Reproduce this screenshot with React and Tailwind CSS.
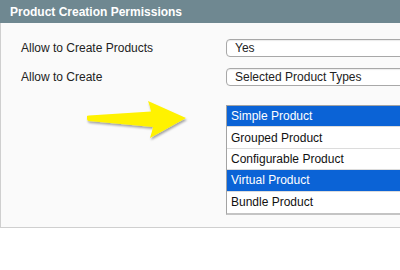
import React from 'react';

const types = [
  { name: 'Simple Product', selected: true },
  { name: 'Grouped Product', selected: false },
  { name: 'Configurable Product', selected: false },
  { name: 'Virtual Product', selected: true },
  { name: 'Bundle Product', selected: false },
];

function Arrow() {
  return (
    <svg className="absolute left-[84px] top-[98px]" width="108" height="46" viewBox="0 0 108 46">
      <defs>
        <filter id="sh" x="-10%" y="-20%" width="130%" height="150%">
          <feDropShadow dx="1" dy="2" stdDeviation="1.2" floodColor="#000" floodOpacity="0.35" />
        </filter>
      </defs>
      <path
        d="M3 18 Q3 17.5 5 17.5 L67 13.5 Q66 8 64 3 L102 20 L66 40 Q68 34 69 29 L5 23 Q3 23 3 21 Z"
        fill="#fff200"
        filter="url(#sh)"
      />
    </svg>
  );
}

export default function App() {
  return (
    <div className="relative w-[400px] h-[270px] overflow-hidden bg-white font-['Liberation_Sans',Arial,sans-serif] text-[12px] text-[#222]">
      <div className="h-[23px] bg-[#6f8891] pl-[10px] flex items-center text-white font-bold text-[12px]">
        Product Creation Permissions
      </div>
      <div className="h-[205px] bg-[#fafafa] border-l border-b border-[#cfcfcf] pt-[16px]">
        <div className="flex items-center h-[18px]">
          <div className="w-[225px] shrink-0 pl-[20px]">Allow to Create Products</div>
          <div className="w-[220px] shrink-0 h-[18px] rounded-[4px] border border-[#a8a8a8] bg-white pl-[8px] flex items-center shadow-[inset_0_1px_1px_rgba(0,0,0,0.08)]">
            Yes
          </div>
        </div>
        <div className="flex items-center h-[18px] mt-[11px]">
          <div className="w-[225px] shrink-0 pl-[20px]">Allow to Create</div>
          <div className="w-[220px] shrink-0 h-[18px] rounded-[4px] border border-[#a8a8a8] bg-white pl-[8px] flex items-center shadow-[inset_0_1px_1px_rgba(0,0,0,0.08)]">
            Selected Product Types
          </div>
        </div>
        <div className="flex mt-[19px]">
          <div className="w-[225px] shrink-0" />
          <div className="w-[220px] shrink-0 border border-[#a3a3a3] border-b-2 border-b-[#c4c4c4] bg-white">
            {types.map((t) => (
              <div
                key={t.name}
                className={
                  t.selected
                    ? 'h-[21.4px] flex items-center pl-[4px] bg-[#0b63d6] text-white border-b border-[#dcdcdc]'
                    : 'h-[21.4px] flex items-center pl-[4px] bg-white text-[#111] border-b border-[#dcdcdc] last:border-b-0'
                }
              >
                {t.name}
              </div>
            ))}
          </div>
        </div>
      </div>
      <Arrow />
    </div>
  );
}
